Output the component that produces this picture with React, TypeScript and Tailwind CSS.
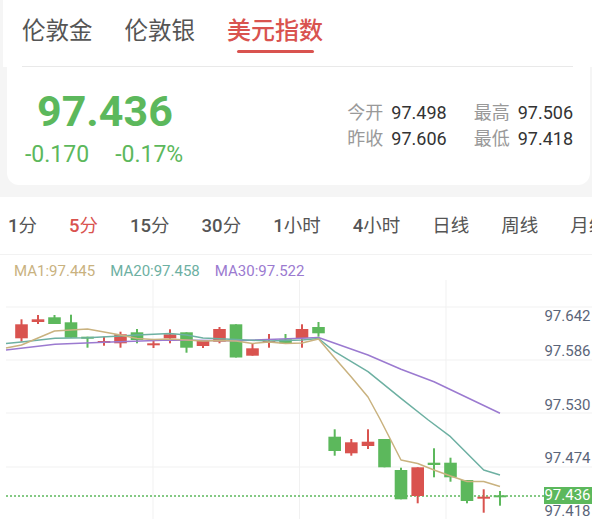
import React from "react";

// [cx, up, bodyTop, bodyBottom, wickTop, wickBottom] in page pixels (chart top = 280)
type Candle = [number, boolean, number, number, number, number];

const CHART_TOP = 280;
const RED = "#d9534f";
const GREEN = "#5cb85c";

const candles: Candle[] = [
    [21.5, false, 324.3, 338.3, 319.3, 341.7],
    [38, false, 319.3, 322, 315, 324],
    [54.5, true, 317.3, 324, 315, 324],
    [71, true, 322.3, 337.7, 314.7, 337.7],
    [87.5, true, 336.7, 338.7, 336.7, 347.7],
    [104, false, 341, 343, 336.7, 345.7],
    [120.5, false, 334.3, 343.3, 331.7, 347.7],
    [137, true, 332.3, 340, 329, 343.3],
    [153.5, false, 343.3, 345.3, 339.3, 348],
    [170, false, 334.3, 338.3, 329.3, 343.3],
    [186.5, true, 332.3, 347.7, 332.3, 352.7],
    [203, false, 341, 346, 341, 348],
    [219.5, false, 329, 341.7, 327, 343.3],
    [236, true, 324.3, 357.5, 324.3, 357.5],
    [252.5, false, 348.3, 355.7, 344, 355.7],
    [269, false, 341, 342.6, 334, 347.7],
    [285.5, true, 339.3, 343.3, 334, 343.3],
    [302, false, 329, 338, 324.3, 347.7],
    [318.5, true, 327, 333.3, 322, 336.7],
    [334.7, true, 436.7, 451, 429.3, 455.7],
    [351.3, false, 442.3, 453.3, 439, 455.7],
    [368, false, 441.7, 446, 429.3, 449],
    [384.5, true, 439, 467.3, 439, 467.3],
    [401, true, 470, 499.3, 467.7, 499.3],
    [417.7, false, 467.3, 496, 467.3, 503.3],
    [434, true, 462.7, 465, 448.3, 477.3],
    [450.5, true, 462.7, 477.3, 457.7, 481.7],
    [467, true, 480, 501, 480, 503.3],
    [483.7, false, 496.7, 498.7, 489.3, 512.7],
    [500, true, 495.3, 497.3, 491, 505.7],
];

const maLines: { color: string; pts: [number, number][] }[] = [
    {
        color: "#9b7ad0",
        pts: [
            [6, 350], [55, 344.3], [104, 342.3], [170, 340], [236, 340.7], [302, 338.3],
            [318.5, 337.5], [368, 355], [401, 369.3], [434, 381.7], [500, 413.3],
        ],
    },
    {
        color: "#6db0a2",
        pts: [
            [6, 343.5], [21.5, 342], [55, 338.3], [87.5, 337.7], [120.5, 336], [137, 335],
            [170, 333.5], [186.5, 335], [203, 338], [236, 339.5], [269, 341], [302, 340],
            [318.5, 338.5], [334.7, 351.7], [368, 371.7], [401, 398.3], [428.3, 420],
            [450.5, 436.7], [483.7, 470], [500, 475],
        ],
    },
    {
        color: "#c9b27f",
        pts: [
            [6, 348], [21.5, 345], [38, 338], [54.5, 331], [71, 330], [87.5, 329], [104, 332],
            [120.5, 335], [137, 338.5], [153.5, 339.5], [170, 339], [186.5, 340], [203, 341],
            [219.5, 340.5], [236, 341], [252.5, 343.5], [269, 342], [285.5, 343.5], [302, 343],
            [318.5, 339], [334.7, 358], [351.3, 377], [368, 397], [380, 419], [401, 460],
            [417.7, 463.5], [434, 470], [450.5, 476], [467, 481.5], [483.7, 481.5], [500, 486.5],
        ],
    },
];

const axisLabels: [string, number][] = [
    ["97.642", 316],
    ["97.586", 351],
    ["97.530", 404.5],
    ["97.474", 458],
    ["97.418", 511],
];

const periods = [
    { num: "1", unit: "分" },
    { num: "5", unit: "分", active: true },
    { num: "15", unit: "分" },
    { num: "30", unit: "分" },
    { num: "1", unit: "小时" },
    { num: "4", unit: "小时" },
    { num: "", unit: "日线" },
    { num: "", unit: "周线" },
    { num: "", unit: "月线" },
];

function KChart() {
    const y = (v: number) => v - CHART_TOP;
    return (
        <svg width={592} height={239} className="block">
            {/* grid */}
            {[307, 360, 413, 467].map((gy) => (
                <line key={gy} x1={6} x2={592} y1={y(gy)} y2={y(gy)} stroke="#f1f1f1" strokeWidth={1} />
            ))}
            {[153, 299.5, 446].map((gx) => (
                <line key={gx} x1={gx} x2={gx} y1={0} y2={239} stroke="#f1f1f1" strokeWidth={1} />
            ))}

            {/* current price line */}
            <line x1={6} x2={544} y1={y(496)} y2={y(496)} stroke={GREEN} strokeWidth={1.5} strokeDasharray="2 2" />

            {/* candles */}
            {candles.map(([cx, up, bt, bb, wt, wb], i) => {
                const c = up ? GREEN : RED;
                const h = Math.max(bb - bt, 2);
                return (
                    <g key={i}>
                        <rect x={cx - 1} y={y(wt)} width={2} height={wb - wt} fill={c} />
                        <rect x={cx - 6.3} y={y(bt)} width={12.6} height={h} fill={c} />
                    </g>
                );
            })}

            {/* moving averages */}
            {maLines.map((l) => (
                <polyline
                    key={l.color}
                    points={l.pts.map(([px, py]) => `${px},${y(py)}`).join(" ")}
                    fill="none"
                    stroke={l.color}
                    strokeWidth={1.5}
                    strokeLinejoin="round"
                />
            ))}

            {/* axis labels */}
            {axisLabels.map(([t, cy]) => (
                <text key={t} x={590.5} y={y(cy) + 5.3} textAnchor="end" fontSize={15} fill="#5b6579">
                    {t}
                </text>
            ))}
            <rect x={544} y={y(487)} width={48} height={17} fill={GREEN} />
            <text x={590.5} y={y(495) + 5.3} textAnchor="end" fontSize={15} fill="#ffffff">
                97.436
            </text>
        </svg>
    );
}

export default function App() {
    return (
        <div className="w-[592px] h-[519px] overflow-hidden bg-white font-[Roboto,'Noto_Sans_CJK_SC',sans-serif]">
            {/* ===== Top: instrument tabs + quote card ===== */}
            <div className="bg-[#f5f5f5] pb-[12px]">
                <div className="ml-[3px] h-[67px] bg-white px-[19px]">
                    <div className="flex h-full gap-8 border-b border-[#e9e9e9] pt-[16px]">
                        <span className="text-[23.5px] leading-[30px] text-[#555]">伦敦金</span>
                        <span className="text-[23.5px] leading-[30px] text-[#555]">伦敦银</span>
                        <div className="flex flex-col items-center">
                            <span className="text-[24px] leading-[30px] font-medium text-[#d9534f]">美元指数</span>
                            <span className="mt-[4px] h-[3px] w-[77px] rounded-full bg-[#d9534f]" />
                        </div>
                    </div>
                </div>

                <div className="ml-[7px] mr-[2px] flex h-[118px] items-center justify-between rounded-b-[12px] bg-white pr-[17px]">
                    <div className="flex flex-col self-start pt-[21px]">
                        <span className="ml-[30px] text-[43px] leading-[46px] font-bold text-[#5cb85c]">97.436</span>
                        <div className="ml-[18px] mt-[9px] flex gap-[26px] text-[23px] leading-[24px] text-[#5cb85c]">
                            <span>-0.170</span>
                            <span>-0.17%</span>
                        </div>
                    </div>
                    <div className="grid grid-cols-2 gap-x-[27px] text-[18px] leading-[26px]">
                        <div><span className="text-[#999]">今开</span><span className="ml-[8px] text-[#333]">97.498</span></div>
                        <div><span className="text-[#999]">最高</span><span className="ml-[8px] text-[#333]">97.506</span></div>
                        <div><span className="text-[#999]">昨收</span><span className="ml-[8px] text-[#333]">97.606</span></div>
                        <div><span className="text-[#999]">最低</span><span className="ml-[8px] text-[#333]">97.418</span></div>
                    </div>
                </div>
            </div>

            {/* ===== Period tabs ===== */}
            <div className="flex h-[57px] gap-8 overflow-hidden whitespace-nowrap pl-2 pt-[18px] text-[18.5px] leading-[22px]">
                {periods.map((p, i) => (
                    <span key={i} className={p.active ? "text-[#d9534f]" : "text-[#555]"}>
                        {p.num && <span className="font-medium">{p.num}</span>}
                        {p.unit}
                    </span>
                ))}
            </div>

            {/* ===== Chart ===== */}
            <div className="border-t border-[#f2f2f2]">
                <div className="flex h-[25px] gap-[15px] pl-[14px] pt-[7px] text-[15px] leading-[18px]">
                    <span className="text-[#c9b27f]">MA1:97.445</span>
                    <span className="text-[#6db0a2]">MA20:97.458</span>
                    <span className="text-[#9b7ad0]">MA30:97.522</span>
                </div>
                <KChart />
            </div>
        </div>
    );
}
